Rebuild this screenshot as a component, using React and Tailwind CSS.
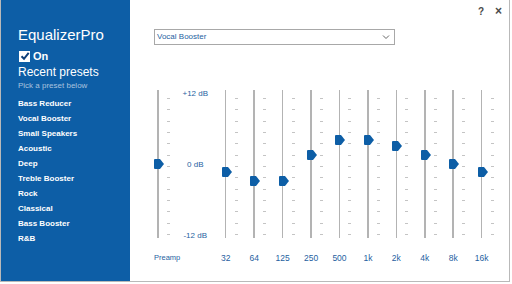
import React from "react";

const presets = [
  "Bass Reducer",
  "Vocal Booster",
  "Small Speakers",
  "Acoustic",
  "Deep",
  "Treble Booster",
  "Rock",
  "Classical",
  "Bass Booster",
  "R&B",
];

// thumb centre, px from top of the track (track runs 90 -> 238)
const bands = [
  { label: "32", y: 82 },
  { label: "64", y: 91 },
  { label: "125", y: 91 },
  { label: "250", y: 65 },
  { label: "500", y: 50 },
  { label: "1k", y: 50 },
  { label: "2k", y: 56 },
  { label: "4k", y: 65 },
  { label: "8k", y: 74 },
  { label: "16k", y: 82 },
];

const ticks = Array.from({ length: 13 }, (_, i) => 8 + i * 11.33);

const Thumb = ({ y, x }) => (
  <svg
    width="10"
    height="10"
    viewBox="0 0 10 10"
    className="absolute"
    style={{ top: y - 5, left: x - 4 }}
  >
    <path d="M1 0 H6 L10 5 L6 10 H1 Q0 10 0 9 V1 Q0 0 1 0 Z" fill="#0d5ea6" />
  </svg>
);

const Track = ({ lineX, y }) => (
  <div className="relative h-[148px]">
    <div className="absolute top-0 bottom-0 w-[1.5px] bg-[#b3b3b3]" style={{ left: lineX - 0.75 }} />
    {ticks.map((t, i) => (
      <div
        key={i}
        className="absolute w-[3px] h-[1px] bg-[#c4c4c4]"
        style={{ top: t, left: lineX + 9 }}
      />
    ))}
    <Thumb y={y} x={lineX} />
  </div>
);

const App = () => {
  return (
    <div
      className="w-[510px] h-[282px] flex bg-white border-l border-r border-b border-[#b9b9b9] overflow-hidden"
      style={{ fontFamily: '"Liberation Sans", Arial, sans-serif' }}
    >
      {/* sidebar */}
      <aside className="w-[129px] shrink-0 bg-[#0d5ea6] text-white pl-[17px] pt-[25px]">
        <h1 className="text-[15px] leading-[20px]">EqualizerPro</h1>
        <div className="flex items-center gap-[3px] mt-[5px] ml-[1px]">
          <div className="w-[11px] h-[11px] bg-white flex items-center justify-center">
            <svg width="10" height="10" viewBox="0 0 10 10">
              <path d="M1.5 5.2 L4 7.8 L8.7 1.8" stroke="#0d3f7a" strokeWidth="2" fill="none" />
            </svg>
          </div>
          <span className="text-[11px] font-bold leading-[12px]">On</span>
        </div>
        <div className="text-[12px] leading-[14px] mt-[3px]">Recent presets</div>
        <div className="text-[8px] leading-[10px] mt-[2px] text-[#a9c3df]">Pick a preset below</div>
        <ul className="mt-[5px]">
          {presets.map((p) => (
            <li key={p} className="text-[8px] font-bold leading-[15px] text-white">
              {p}
            </li>
          ))}
        </ul>
      </aside>

      {/* main */}
      <main className="flex-1 flex flex-col">
        <div className="h-[22px] flex items-center justify-end gap-[11px] pr-[7px] text-[#4a4a4a] font-bold">
          <span className="text-[10px]">?</span>
          <span className="text-[12px]">×</span>
        </div>

        <div className="ml-[24px] mt-[7px] w-[241px] h-[16px] border border-[#a8a8a8] flex items-center justify-between pl-[2px] pr-[4px]">
          <span className="text-[8px] text-[#1f5f9f]">Vocal Booster</span>
          <svg width="8" height="6" viewBox="0 0 8 6">
            <path d="M1 1.5 L4 4.5 L7 1.5" stroke="#666" strokeWidth="1" fill="none" />
          </svg>
        </div>

        <div className="flex ml-[18px] mt-[45px] text-[#1f5f9f]">
          <div className="w-[31px] flex flex-col">
            <Track lineX={10} y={74} />
            <div className="text-[7.5px] leading-[10px] mt-[15px] pl-[6px]">Preamp</div>
          </div>

          <div className="w-[32.5px] relative h-[148px] text-[8px] leading-[10px]">
            <div className="absolute inset-x-0 text-center top-[-1px]">+12 dB</div>
            <div className="absolute inset-x-0 text-center top-[70px]">0 dB</div>
            <div className="absolute inset-x-0 text-center top-[141px]">-12 dB</div>
          </div>

          {bands.map((b) => (
            <div key={b.label} className="w-[28.45px] flex flex-col">
              <Track lineX={14.2} y={b.y} />
              <div className="text-[8.5px] leading-[10px] mt-[15px] text-center">{b.label}</div>
            </div>
          ))}
        </div>
      </main>
    </div>
  );
};

export default App;
